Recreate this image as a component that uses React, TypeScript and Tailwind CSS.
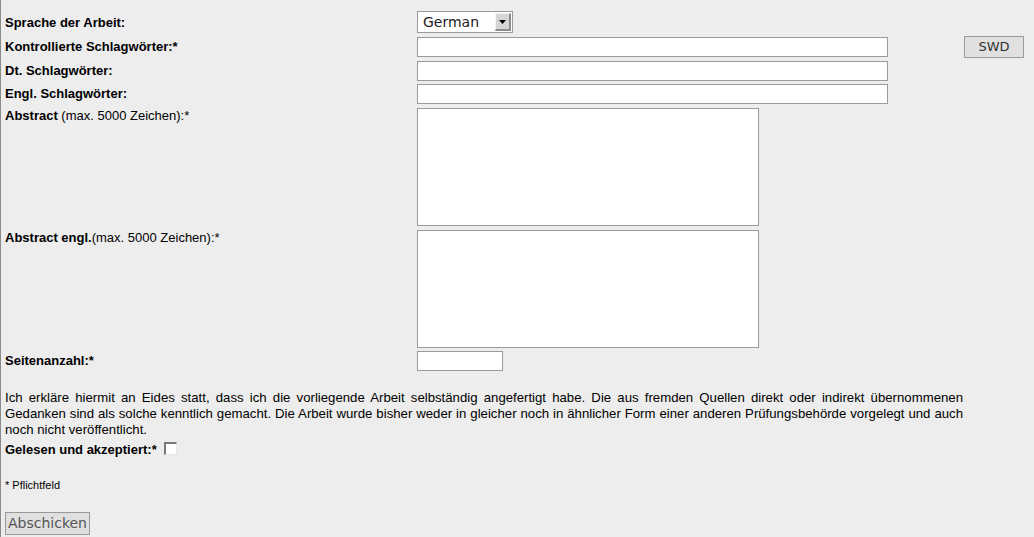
import React from "react";

const label = "text-[13px] font-bold text-black leading-[16px]";

export default function App() {
  return (
    <div className="min-h-[537px] w-[1034px] bg-[#ededed] border-l border-[#8a8a8a] font-['Liberation_Sans',Arial,sans-serif] text-black">
      <div className="pl-[4px] pt-[11px]">
        {/* Sprache */}
        <div className="flex items-center h-[22px]">
          <div className={`w-[412px] ${label} pt-[1px]`}>Sprache der Arbeit:</div>
          <div className="w-[96px] h-[22px] bg-white border border-[#9a9a9a] flex items-center justify-between pl-[5px] pr-[1px]">
            <span className="font-['DejaVu_Sans',sans-serif] text-[14px] text-[#222] leading-none">German</span>
            <span className="w-[16px] h-[18px] bg-[#d6d6d6] border-t border-l border-[#f4f4f4] border-r-2 border-b-2 border-r-[#8c8c8c] border-b-[#8c8c8c] flex items-center justify-center">
              <svg width="7" height="4" viewBox="0 0 7 4"><path d="M0 0h7L3.5 4z" fill="#000" /></svg>
            </span>
          </div>
        </div>
        {/* Kontrollierte */}
        <div className="flex items-center h-[22px] mt-[3px]">
          <div className={`w-[412px] ${label}`}>Kontrollierte Schlagwörter:*</div>
          <div className="w-[471px] h-[20px] bg-white border border-[#9a9a9a]" />
          <div className="ml-[76px] w-[60px] h-[22px] bg-[#e0e0e0] border border-[#9a9a9a] flex items-center justify-center font-['DejaVu_Sans',sans-serif] text-[13px] text-[#333]">SWD</div>
        </div>
        {/* Dt */}
        <div className="flex items-center h-[20px] mt-[3px]">
          <div className={`w-[412px] ${label}`}>Dt. Schlagwörter:</div>
          <div className="w-[471px] h-[20px] bg-white border border-[#9a9a9a]" />
        </div>
        {/* Engl */}
        <div className="flex items-center h-[20px] mt-[3px]">
          <div className={`w-[412px] ${label}`}>Engl. Schlagwörter:</div>
          <div className="w-[471px] h-[20px] bg-white border border-[#9a9a9a]" />
        </div>
        {/* Abstract */}
        <div className="flex items-start mt-[4px]">
          <div className={`w-[412px] text-[13px] leading-[16px]`}>
            <b>Abstract</b> (max. 5000 Zeichen):*
          </div>
          <div className="w-[342px] h-[118px] bg-white border border-[#9a9a9a]" />
        </div>
        {/* Abstract engl */}
        <div className="flex items-start mt-[4px]">
          <div className={`w-[412px] text-[13px] leading-[16px]`}>
            <b>Abstract engl.</b>(max. 5000 Zeichen):*
          </div>
          <div className="w-[342px] h-[118px] bg-white border border-[#9a9a9a]" />
        </div>
        {/* Seitenanzahl */}
        <div className="flex items-center h-[20px] mt-[3px]">
          <div className={`w-[412px] ${label}`}>Seitenanzahl:*</div>
          <div className="w-[86px] h-[20px] bg-white border border-[#9a9a9a]" />
        </div>
        {/* Declaration */}
        <p className="mt-[19px] w-[958px] text-[13.2px] leading-[16px] text-justify">
          Ich erkläre hiermit an Eides statt, dass ich die vorliegende Arbeit selbständig angefertigt habe. Die aus fremden Quellen direkt oder indirekt übernommenen Gedanken sind als solche kenntlich gemacht. Die Arbeit wurde bisher weder in gleicher noch in ähnlicher Form einer anderen Prüfungsbehörde vorgelegt und auch noch nicht veröffentlicht.
        </p>
        <div className="flex items-center mt-[4px] h-[16px]">
          <span className={label}>Gelesen und akzeptiert:*</span>
          <span className="ml-[7px] -mt-[4px] w-[13px] h-[13px] bg-white border-t-2 border-l-2 border-[#7a7a7a] border-r border-b border-r-[#e6e6e6] border-b-[#e6e6e6]" />
        </div>
        <div className="mt-[20px] text-[11px] leading-[14px]">* Pflichtfeld</div>
        <div className="mt-[20px] w-[85px] h-[23px] bg-[#e0e0e0] border border-[#9a9a9a] flex items-center justify-center font-['DejaVu_Sans',sans-serif] text-[14px] text-[#555]">
          Abschicken
        </div>
      </div>
    </div>
  );
}
